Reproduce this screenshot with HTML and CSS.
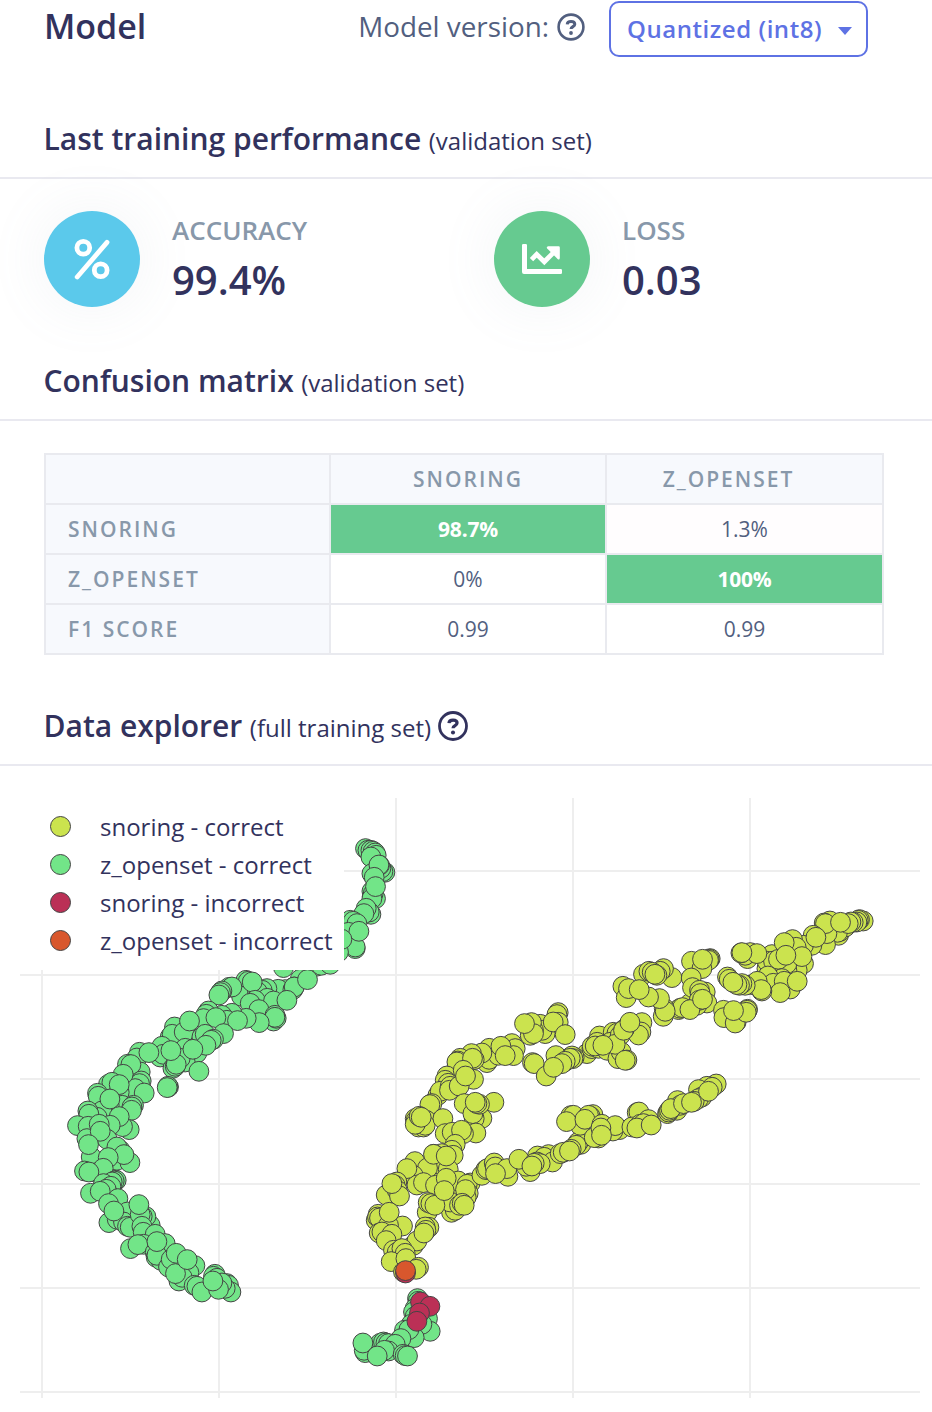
FILE: index.html
```html
<!DOCTYPE html>
<html lang="en">
<head>
<meta charset="utf-8">
<title>Model</title>
<link rel="stylesheet" href="styles.css">
</head>
<body>
<main class="panel">
  <header class="panel-header">
    <h1 class="panel-title">Model</h1>
    <div class="version">
      <span class="version-label">Model version:</span>
      <svg class="help help-small" viewBox="0 0 28 28"><circle cx="14" cy="14" r="12.4"/><path class="mark" d="M10.2 11.3c.2-1.9 1.6-2.8 3.8-2.8 2.3 0 3.8 1.1 3.8 2.8 0 2.4-3.8 2.2-3.8 4.7"/><circle class="dot" cx="14" cy="20" r="1.9"/></svg>
      <button class="select" type="button"><span class="select-text">Quantized (int8)</span><span class="caret"></span></button>
    </div>
  </header>

  <section>
    <h2 class="heading"><span class="heading-text">Last training performance</span> <small class="h-note">(validation set)</small></h2>
    <div class="stats">
      <div class="stat">
        <div class="badge badge-blue">
          <svg class="badge-icon" viewBox="0 0 96 96"><g fill="none" stroke="#fff" stroke-width="4.8" stroke-linecap="round"><path d="M33.2 66 63 31.4"/><circle cx="39.3" cy="36.7" r="6.4"/><circle cx="56.7" cy="59.3" r="6.4"/></g></svg>
        </div>
        <div class="stat-body"><div class="stat-label">ACCURACY</div><div class="stat-value">99.4%</div></div>
      </div>
      <div class="stat">
        <div class="badge badge-green">
          <svg class="badge-icon" viewBox="0 0 96 96"><path fill="#fff" d="M29.2 33h2.6q1.2 0 1.2 1.2V58h33.8q1.2 0 1.2 1.2v2.6q0 1.2-1.2 1.2H30q-2 0-2-2V34.2q0-1.2 1.2-1.2Z"/><path d="m37.5 48.6 5.2-5.2 7.6 7.4 9.4-9.4" fill="none" stroke="#fff" stroke-width="4.8"/><path d="M54.2 35.3h10.4q1.2 0 1.2 1.2v10.4q-.4 2.4-2.2 1L53.2 37.6q-1.2-1.8 1-2.3Z" fill="#fff"/></svg>
        </div>
        <div class="stat-body"><div class="stat-label">LOSS</div><div class="stat-value">0.03</div></div>
      </div>
    </div>
  </section>

  <section>
    <h2 class="heading"><span class="heading-text">Confusion matrix</span> <small class="h-note">(validation set)</small></h2>
    <div class="matrix">
      <div class="cell head"></div><div class="cell head">SNORING</div><div class="cell head head-last">Z_OPENSET</div>
      <div class="cell head row-head">SNORING</div><div class="cell good">98.7%</div><div class="cell faint">1.3%</div>
      <div class="cell head row-head">Z_OPENSET</div><div class="cell">0%</div><div class="cell good">100%</div>
      <div class="cell head row-head">F1 SCORE</div><div class="cell">0.99</div><div class="cell">0.99</div>
    </div>
  </section>

  <section>
    <h2 class="heading"><span class="heading-text">Data explorer</span> <small class="h-note">(full training set)</small>
      <svg class="help help-large" viewBox="0 0 28 28"><circle cx="14" cy="14" r="12.6"/><path class="mark" d="M10.2 11.3c.2-1.9 1.6-2.8 3.8-2.8 2.3 0 3.8 1.1 3.8 2.8 0 2.4-3.8 2.2-3.8 4.7"/><circle class="dot" cx="14" cy="20" r="1.9"/></svg>
    </h2>
    <div class="explorer">
      <svg class="plot" viewBox="0 766 932 646" id="plot"></svg>
      <ul class="legend">
        <li><i class="key lime"></i>snoring - correct</li>
        <li><i class="key mint"></i>z_openset - correct</li>
        <li><i class="key crimson"></i>snoring - incorrect</li>
        <li><i class="key orange"></i>z_openset - incorrect</li>
      </ul>
    </div>
  </section>
</main>
<script src="plot.js"></script>
</body>
</html>
```
FILE: styles.css
```css
* { box-sizing: border-box; }
body {
  margin: 0;
  background: #fff;
  color: #32325d;
  font-family: "Open Sans", "Noto Sans", sans-serif;
}
.panel { width: 932px; height: 1412px; overflow: hidden; }
.panel-header {
  display: flex;
  justify-content: space-between;
  align-items: flex-start;
  height: 119px;
  padding: 0 64px 0 44px;
}
.panel-title { margin: 6px 0 0; font-size: 34px; line-height: 40px; font-weight: 600; }
.version { display: flex; align-items: flex-start; color: #525f7f; }
.version-label { margin-top: 6px; font-size: 27.8px; line-height: 40px; white-space: nowrap; }
.help { flex: none; fill: none; stroke: currentColor; stroke-width: 2.6; }
.help .mark { stroke-width: 3; }
.help .dot { fill: currentColor; stroke: none; }
.help-small { width: 28px; height: 28px; margin: 13px 24px 0 8px; }
.help-large { width: 30px; height: 30px; align-self: flex-start; margin: 5px 0 0 7px; }
.select {
  display: flex;
  align-items: center;
  justify-content: space-between;
  width: 259px;
  height: 56px;
  margin: 1px 0 0;
  padding: 0 14px 0 16px;
  border: 2px solid #5e72e4;
  border-radius: 10px;
  background: #fff;
  color: #5e72e4;
  font: 600 24px/36px "Open Sans", sans-serif;
  letter-spacing: .55px;
  white-space: nowrap;
}
.caret { border: 7px solid transparent; border-top: 8px solid #5e72e4; border-bottom: 0; margin-top: 3px; }
.heading {
  display: flex;
  align-items: baseline;
  height: 60px;
  margin: 0;
  padding-left: 43.5px;
  border-bottom: 2px solid #e9e9f0;
  font-size: 30px;
  font-weight: 600;
  line-height: 40px;
  white-space: nowrap;
}
.h-note { margin-left: 7.5px; font-size: 24px; font-weight: 400; }
.stats { display: grid; grid-template-columns: 450px 1fr; height: 182px; padding: 32px 0 0 44px; }
.stat { display: flex; gap: 32px; }
.badge { width: 96px; height: 96px; border-radius: 50%; box-shadow: 0 0 60px rgba(136, 152, 170, .11); }
.badge-icon { display: block; width: 96px; height: 96px; }
.badge-blue { background: #5bc9eb; }
.badge-green { background: #66ca90; }
.stat-body { margin-top: -1px; }
.stat-label { font-size: 26px; line-height: 40px; font-weight: 600; color: #8898aa; }
.stat-value { font-size: 40px; line-height: 60px; font-weight: 600; }
.matrix {
  display: grid;
  grid-template-columns: 283px 274px 275px;
  grid-auto-rows: 48px;
  gap: 2px;
  width: 840px;
  margin: 32px 0 51px 44px;
  padding: 2px;
  background: #e9eaef;
}
.cell {
  display: flex;
  align-items: center;
  justify-content: center;
  background: #fff;
  color: #525f7f;
  font-size: 21px;
}
.head { background: #f7f9fd; color: #8898aa; font-weight: 600; letter-spacing: 2px; }
.head-last { padding-right: 32px; }
.row-head { justify-content: flex-start; padding-left: 22px; }
.good { background: #66ca90; color: #fff; font-weight: 700; letter-spacing: -.2px; }
.faint { background: #fffdfe; }
.explorer { position: relative; height: 646px; }
.plot { display: block; width: 932px; height: 646px; }
.legend {
  position: absolute;
  left: 20px;
  top: 32px;
  width: 324px;
  height: 172px;
  margin: 0;
  padding: 9px 0 0 29.5px;
  background: #fff;
  list-style: none;
  font-size: 24px;
}
.legend li { display: flex; align-items: center; height: 38px; white-space: nowrap; }
.key { width: 21px; height: 21px; margin-right: 29.5px; border: 1px solid #444; border-radius: 50%; }
.lime { background: #cbe34e; }
.mint { background: #72e588; }
.crimson { background: #bb3056; }
.orange { background: #d8572d; }
```
FILE: plot.js
```js
const mint = `185,1040 120,1150 150,1225 110,1175 125,1085 95,1135 365.3,848.3 367.7,850 370.7,850 373,851 375,852.7 376,855 370.7,856.7 371.7,873.3 384.7,872 382.7,871.3 380.7,868 379.3,865 378.7,864.7
374,877 372,896 375.3,898.3 371.7,891 373,893.3 371.7,898.3 375.3,886.3 370.7,914 369,911.7 366,908 363.7,913.3 350,920 353,921 356.7,923.3 348.3,932 355,948.3 355,946.7 358.7,931 338.3,951.7 341.7,939
305,966.7 316,966 321,965 330,964 283.3,967.3 300,979 292,988 294,986.7 285,989.3 275,991.7 278,989 266.7,988.3 262,990 245.7,980 248,981 241.3,996 257.3,991.7 229,987 231.7,986.7 221.7,990.7 220.3,992.3 218.7,994.7 252,981.7
267,998 255,1000 250,1003 273.3,1000.7 258.7,1009.3 273.3,1020.7 276,1018 274.7,1015 274.7,1017 292.7,989.3 294,986.7 286.7,1000 307.3,979.3 259,1022.3 246,1018 231.7,1013 221.7,1015 226.7,1020 208.3,1010.7 206,1014 203.3,1018.3 237.3,1020.3 215.7,1017.3
174.3,1026.7 170,1036.7 172,1034 184,1031.7 189.3,1020.7 223.3,1033.3 201.7,1036.7 205,1034 213.3,1039 211,1040 196.7,1052.7 205.7,1045 185,1048 161.7,1046 160,1056.7 163,1054 185,1061.7 180,1058 192.7,1049 172.7,1068 175,1066 176,1064 170.7,1050.3 198.7,1071 168.3,1086.7 167.7,1086 167,1087.3
139.3,1052 136.7,1057.7 140,1071.7 127.3,1064 130.7,1064.3 148.7,1052.3 141,1080.7 139.3,1083.3 135,1088.3 123,1074 108.3,1084 111.7,1082 119,1092 97.3,1093 98,1096 119,1084.3 144,1092.7 122,1105 133.3,1105 131.7,1106.7 131.3,1110 109,1105 101.7,1110.7 97,1117 109.7,1098.7 87.7,1110.7 88.7,1114 77.3,1125.3 88,1126 129,1129.3 122.3,1126.3 119,1116.3 110,1125 99,1124
86.7,1138.3 107,1139 100,1131 116.7,1146.7 91,1156.7 88.3,1144.3 116.7,1160 129.7,1162.3 123.7,1154.3 108,1157.3 84.3,1170.7 96.7,1172.3 103,1168 88.7,1171.7 116,1180 114,1180.7 112,1181.7 103.3,1183.3 110.7,1186 90.3,1193 108,1193.7 106,1189 100,1191 117.7,1198.3 108.3,1203.3 127.3,1211.7 108.7,1222.3 117,1219 123.3,1221.7 113.7,1210.7 127.3,1226 130,1227 145.7,1216.3 142,1216 140,1214.3 138.7,1204.3 141.7,1226 143,1232 155,1234 130.3,1248.3 143.3,1244 137.7,1244.3 165,1243.3 155,1252 156,1257 160.7,1260 156.7,1255 156.7,1241.3 168.3,1266.7 171,1259 176,1253 194.7,1265.3 188.7,1272.3 178.7,1280.7 182,1277 175.3,1273.3 187,1259.3 194,1285 196.7,1286 201.7,1291.7 214.7,1274 213.3,1276 216.7,1278 226.7,1283.3 228.3,1285 230.7,1291.7 225,1288 221.7,1282.7 218.3,1289 212.7,1280.7
417.3,1298.3 418,1301 415,1308 413.3,1311.7 415,1316 427.3,1318.3 430,1331 421.7,1324 411,1324 414,1337.3 404.3,1330 408.7,1329.3 400.7,1338.3 380,1343 383.3,1341.7 385.7,1342.7 388.3,1343.3 395,1344 365,1352.3 364,1350 362.7,1342.7 388.3,1350.7 384.3,1350 377,1355.7 403,1354 405,1355.3 407.3,1355.7`;

const lime = `455,1190 440,1195 460,1195 451,1205 436,1175 690,1003 863,920.7 859.3,919.3 858,920 856.7,921.7 853,922 829.7,920.7 824,922.7 850.7,921.7 838.3,935 840,931 845,926.7 837.3,932 825.3,944.3 826.7,933.3 825.3,923.3 848,923.3 840.3,922 813,935 811.7,945 803.3,945 815.7,937 792.3,939.3 796,947 771.7,954.3 784,942.3 803.3,963.3 797,970 786.7,970 766.7,968.3 767,961 773.3,960.7 786.7,963.3 778.3,959 801.7,956.3 785.7,955 781.7,978.3 767.7,975.7 773,983 790,988.7 784,981 797,981 780,992.3 751.7,984.3 757,981 761.7,990.7 761,989.3 750,952.3 747.3,958.3 745,955 756.7,953.3 740.7,952.7 741.7,952.3 727.3,976.7 729,979 745,985 741.7,983.3 739.3,985 736.7,984.3 732.7,982
691.3,961 710,958.3 709,959 708.3,960 701.7,968.3 702.3,959 671.7,977.3 691,977.7 692.3,987.3 705,991.7 699.3,990 700,993.3 706.7,1002.7 696.7,1005 699,1000 678.3,1009.3 680,1008 682.3,1007.3 689.7,1009.3 702.3,999 663,1016 664,1008 665,1011 659.3,998.3 643.3,974 648.7,971 663.3,968.3 660,971 652,972 656.7,975 654.7,974 622.7,986 626,997.3 628.3,988.3 648.3,996.7 639,989.3
723.3,1010 723.7,1017.3 736,1021.7 735,1022.7 747.3,1009 747,1010 746,1012 733.3,1010.3
558,1012.3 556.7,1014.3 558,1022 545,1033.3 540,1024 542,1030 533.3,1030 531.3,1022.3 530,1035 533.3,1033.3 524.3,1023.3 553,1021.7 565,1034.3 586.7,1053.3 591.7,1048.3 599.3,1035.7 592,1046 598.3,1048 597,1042 595,1045.7 607,1050 613,1032 616.7,1033 610,1042 620,1035 617.7,1058.3 621,1051.7 641.7,1022.3 640.7,1031.7 638.3,1034.7 615,1044 602.7,1045 624,1029 623.3,1030 629.7,1022 626.7,1059.7 625,1060 555.7,1055.3 532.3,1062.3 534,1063.3 546,1075.7 574,1057 571.7,1055.7 572.7,1058.3 570,1058 565,1061 561.7,1063.3 553.3,1067
511.7,1043.3 515,1048.3 513.3,1055.3 489,1048 486.7,1062.3 489,1059 498.3,1055 500.7,1046 505,1055.3 481.7,1052.7 471.3,1053.3 457,1065 460,1058 457.7,1060.7 456.7,1061.7 474,1059.3 472.3,1058 446.7,1075.7 445,1080 448,1083 463,1070 473.3,1079 437.7,1095 440,1091 450,1086 449.3,1090 459,1085.7 465.3,1075.7 431.7,1103.3 429.7,1104.3 464,1103.3 493.7,1102 481.7,1118 474,1118.3 472.7,1113.3 479.3,1104 476.7,1103.3 475,1102 415,1118.3 416,1120 418.3,1126.7 426,1120 423.3,1126.7 425,1125 415,1124 442.7,1118.3 419,1116 421,1117 475.7,1132.7 445,1133.3 452,1132 463.3,1133.3 461.3,1130
455,1144 451.7,1150 453,1155 441.7,1153.3 414.7,1161.3 433.7,1154 441.7,1165 448,1169 427.3,1167.7 433.3,1154 446,1155.7 413,1175 416.7,1184.7 423.3,1182.3 406.7,1168.3 396.7,1181.7 395,1185 386,1194.7 397,1190 399.3,1195.7 391.7,1183.3 458,1180.7 435.3,1185 446,1178 470,1182.7 467,1184 468,1193 466,1197 465.3,1189.3 427,1212 451.3,1212 455,1210 450,1201.7 428,1202.3 430.7,1203.3 434.7,1205 444,1190.3 459.3,1205 462,1203 464,1205 376,1220 378,1214 377.3,1216.7 379.3,1217.7 402.3,1225.7 388.3,1225 379,1232.7 381.7,1231.7 391.7,1234 389,1212 386,1240.3 428.7,1227 425,1226.7 425.7,1230 413.3,1245 416.7,1240.7 423.7,1232.7 393.3,1250 397,1252 401.7,1248.3 405,1253 391,1261.3 405.7,1258.3 418.3,1267 416,1269 403.3,1271.7
481.7,1175 485.7,1169.3 487.3,1168.3 494,1162.7 495,1166.7 507.7,1176 506.7,1168.3 495.3,1173.3 530,1171.3 537.3,1155.7 526,1166 518.7,1159 548.3,1154.3 544,1157 552.3,1161.7 536.7,1161.7 540,1163.3 534,1163 531.7,1165.7 560,1153.3 563,1152 580.7,1144 578,1142 576,1145 571,1149 569.3,1150.7 570.7,1115.3 573.3,1115 580,1125 592.7,1114.3 590,1116 588.3,1115 566.3,1121.3 584.7,1119 601.7,1124 619.3,1129.3 612.7,1130.7 615,1125.3 598.3,1137.7 594,1137.3 600.7,1127.7 601.3,1135 637,1112.3 638.7,1111.7 648.3,1119.3 631.7,1126.7 640,1124 643.3,1123.3 636.7,1127.7 651,1124.7 677.3,1100.3 676.7,1110 667.3,1113.3 668.3,1111.7 680,1105 669.3,1110 670.7,1108.3 716,1083.7 710,1086.7 706.7,1086 712,1087 698.3,1089.3 701.7,1096.7 698.3,1098.3 694,1101 683.3,1103.3 708.3,1091 691.3,1102`;

const crimson = `405.3,1272.7 420.3,1301.7 429.7,1306 419.3,1312.7 416.7,1321`;
const orange = `405.3,1270.3`;

const dots = (points, fill) => points.trim().split(/\s+/).map(p => {
  const [x, y] = p.split(',');
  return `<circle cx="${x}" cy="${y}" r="9.9" fill="${fill}"/>`;
}).join('');

const columns = [42, 219, 396, 573, 750].map(x => `M${x} 798V1398`).join('');
const rows = [871, 975, 1079, 1184, 1288, 1392].map(y => `M20 ${y}H920`).join('');
document.getElementById('plot').innerHTML =
  `<path d="${columns}${rows}" stroke="#eee" stroke-width="2"/>` +
  `<g stroke="#444" stroke-width="1" transform="translate(.2 .3)">` +
  dots(mint, '#72e588') + dots(lime, '#cbe34e') + dots(crimson, '#bb3056') + dots(orange, '#d8572d') +
  `</g>`;
```
